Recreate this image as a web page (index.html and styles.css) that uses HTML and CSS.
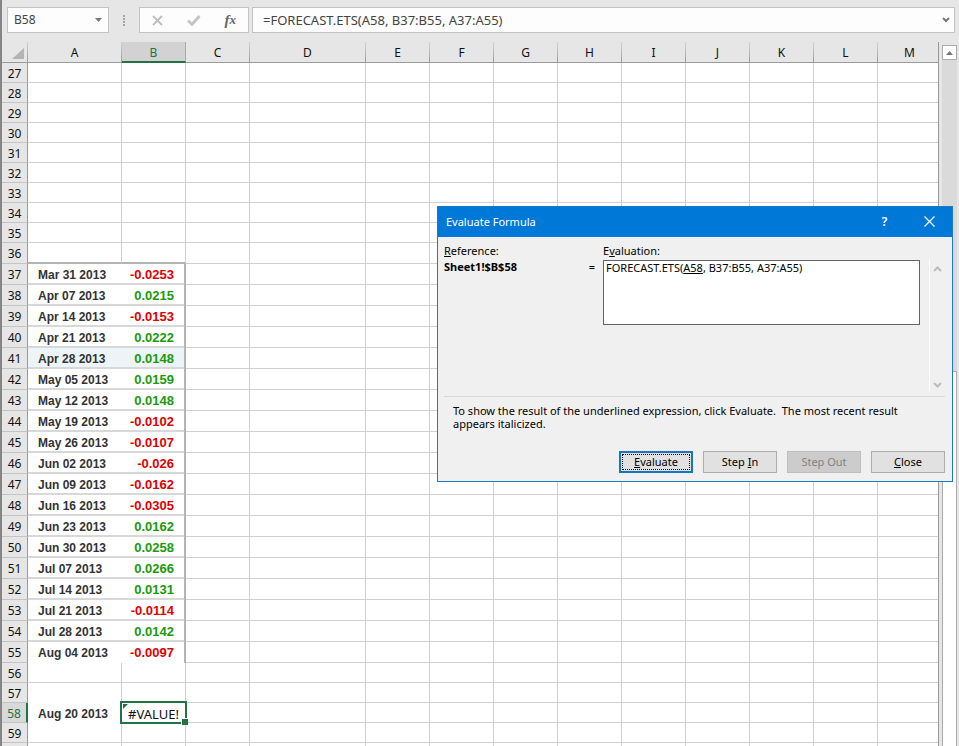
FILE: index.html
```html
<!DOCTYPE html>
<html lang="en">
<head>
<meta charset="utf-8">
<title>Sheet1</title>
<link rel="stylesheet" href="styles.css">
</head>
<body>
<div class="app">
  <header class="formula-bar">
    <div class="name-box">
      <input class="name-input" type="text" value="B58" aria-label="Name box">
      <button class="icon-button" type="button" aria-label="Show names">
        <svg width="7" height="4" viewBox="0 0 7 4"><path d="M0 0h7L3.500 4z" fill="#777"/></svg>
      </button>
    </div>
    <svg class="grip" width="2" height="11" viewBox="0 0 2 11" fill="#a5a5a5"><path d="M0 0h2v2H0zM0 3h2v2H0zM0 6h2v2H0zM0 9h2v2H0z"/></svg>
    <div class="formula-tools">
      <button class="icon-button" type="button" aria-label="Cancel">
        <svg width="12" height="11" viewBox="0 0 12 11"><path d="M1 1l9 9M10 1L1 10" stroke="#bdbdbd" stroke-width="1.800" fill="none"/></svg>
      </button>
      <button class="icon-button" type="button" aria-label="Enter">
        <svg width="14" height="11" viewBox="0 0 14 11"><path d="M1 5.500l4 4L12.500 1" stroke="#c4c4c4" stroke-width="2.800" fill="none"/></svg>
      </button>
      <button class="icon-button fx" type="button" aria-label="Insert function">f<span class="fx-x">x</span></button>
    </div>
    <div class="formula-field">
      <input class="formula-input" type="text" value="=FORECAST.ETS(A58, B37:B55, A37:A55)" aria-label="Formula">
      <button class="icon-button" type="button" aria-label="Expand formula bar">
        <svg width="8" height="6" viewBox="0 0 8 6"><path d="M1 1l3 3 3-3" stroke="#777" stroke-width="2" fill="none"/></svg>
      </button>
    </div>
  </header>
  <main class="workspace">
    <div class="sheet">
      <table class="grid">
        <colgroup>
          <col class="col-index"><col class="col-a"><col class="col-std"><col class="col-std"><col class="col-d">
          <col class="col-std"><col class="col-std"><col class="col-std"><col class="col-std"><col class="col-std">
          <col class="col-std"><col class="col-std"><col class="col-std"><col class="col-std">
        </colgroup>
        <thead>
          <tr>
            <th class="corner"><svg width="12" height="11" viewBox="0 0 12 11"><path d="M12 0v11H0z" fill="#b4b4b4"/></svg></th>
            <th scope="col">A</th><th scope="col" class="active">B</th><th scope="col">C</th><th scope="col">D</th>
            <th scope="col">E</th><th scope="col">F</th><th scope="col">G</th><th scope="col">H</th><th scope="col">I</th>
            <th scope="col">J</th><th scope="col">K</th><th scope="col">L</th><th scope="col">M</th>
          </tr>
        </thead>
        <tbody id="rows"></tbody>
      </table>
    </div>
    <div class="scrollbar">
      <button class="scroll-up" type="button" aria-label="Scroll up">
        <svg width="7" height="4" viewBox="0 0 7 4"><path d="M0 4h7L3.500 0z" fill="#777"/></svg>
      </button>
      <div class="scroll-track"></div>
      <div class="scroll-thumb"></div>
    </div>
  </main>

  <section class="dialog" role="dialog" aria-labelledby="dialog-title">
    <div class="title-bar">
      <h1 class="title" id="dialog-title">Evaluate Formula</h1>
      <button class="title-button help" type="button" aria-label="Help">?</button>
      <button class="title-button" type="button" aria-label="Close window">
        <svg width="11" height="11" viewBox="0 0 11 11"><path d="M.5.5l10 10M10.500.5l-10 10" stroke="#fff" stroke-width="1.200" fill="none"/></svg>
      </button>
    </div>
    <div class="dialog-body">
      <div class="panes">
        <div class="reference">
          <div><u>R</u>eference:</div>
          <div class="reference-line"><b>Sheet1!$B$58</b><span>=</span></div>
        </div>
        <div class="evaluation">
          <label for="evaluation">E<u>v</u>aluation:</label>
          <output class="evaluation-box" id="evaluation">FORECAST.ETS(<u>A58</u>, B37:B55, A37:A55)</output>
        </div>
        <div class="pane-scroll">
          <svg width="9" height="6" viewBox="0 0 9 6"><path d="M1 5l3.500-3.500L8 5" stroke="#bcbcbc" stroke-width="2" fill="none"/></svg>
          <svg width="9" height="6" viewBox="0 0 9 6"><path d="M1 1l3.500 3.500L8 1" stroke="#bcbcbc" stroke-width="2" fill="none"/></svg>
        </div>
      </div>
      <p class="hint">To show the result of the underlined expression, click Evaluate.&nbsp; The most recent result appears italicized.</p>
      <div class="actions">
        <button class="action primary" type="button"><u>E</u>valuate</button>
        <button class="action" type="button">Step <u>I</u>n</button>
        <button class="action" type="button" disabled>Step Out</button>
        <button class="action" type="button"><u>C</u>lose</button>
      </div>
    </div>
  </section>
</div>
<script src="sheet.js"></script>
</body>
</html>
```
FILE: styles.css
```css
* {
  box-sizing: border-box;
}

body {
  margin: 0;
  font: 12px/16px "Noto Sans", "Open Sans", sans-serif;
  color: #111;
  background: #e6e6e6;
}

button,
input {
  font: inherit;
  color: inherit;
}

.app {
  position: relative;
  display: flex;
  flex-direction: column;
  height: 100vh;
  overflow: hidden;
  border-left: 2px solid #858585;
}

/* Formula bar */
.formula-bar {
  display: flex;
  flex: none;
  align-items: center;
  height: 42px;
  padding: 0 4px 2px 5px;
  color: #444;
}

.name-box,
.formula-tools,
.formula-field {
  display: flex;
  align-items: center;
  height: 26px;
  background: #fdfdfd;
  border: 1px solid #c3c3c3;
}

.name-box {
  width: 102px;
  padding: 0 6px;
}

.name-input,
.formula-input {
  flex: 1;
  min-width: 0;
  padding: 0;
  border: 0;
  outline: 0;
  background: none;
}

.formula-input {
  font-size: 13px;
}

.icon-button {
  display: flex;
  align-items: center;
  justify-content: center;
  padding: 0;
  border: 0;
  background: none;
}

.grip {
  margin: 0 14px;
}

.formula-tools {
  justify-content: space-between;
  width: 110px;
  padding: 0 12px;
  margin-right: 3px;
}

.fx {
  font: italic bold 15px/20px "Liberation Serif", serif;
  color: #666;
}

.fx-x {
  font-size: 13px;
}

.formula-field {
  flex: 1;
  padding: 0 4px 0 10px;
}

/* Worksheet */
.workspace {
  display: flex;
  flex: 1;
  min-height: 0;
}

.sheet {
  flex: 1;
  min-width: 0;
  overflow: hidden;
  border-right: 1px solid #999;
}

.grid {
  table-layout: fixed;
  width: 936px;
  border-spacing: 0;
  background: #fff;
}

.col-index {
  width: 26px;
}

.col-a {
  width: 94px;
}

.col-std {
  width: 64px;
}

.col-d {
  width: 116px;
}

.grid th {
  padding: 2px 0 0;
  font-weight: normal;
  background: #e6e6e6;
}

.grid thead th {
  height: 21px;
  border-right: 1px solid #aaa;
  border-bottom: 1px solid #999;
  border-image: linear-gradient(#d4d4d4, #999) 1;
  border-left: 0;
  border-top: 0;
}

.grid thead th.active {
  color: #217346;
  background: #d2d2d2;
  border-image: none;
  border-bottom: 2px solid #217346;
}

.corner svg {
  display: block;
  margin-left: 10px;
}

.grid td {
  height: 20px;
  padding: 2px 0 0;
  border-right: 1px solid #d0d0d0;
  border-bottom: 1px solid #d0d0d0;
}

.grid tbody th {
  border-right: 1px solid #999;
  border-bottom: 1px solid #c4c4c4;
}

.grid tbody th.active {
  color: #217346;
  background: #d9d9d9;
  border-right: 2px solid #217346;
}

.grid .tall td {
  height: 21px;
}

.grid td.date,
.grid td.value {
  padding-bottom: 1px;
  font: bold 13px/16px "Liberation Sans", sans-serif;
  color: #333;
  border-bottom: 0;
}

.grid td.date {
  padding-left: 10px;
  font-size: 12px;
  border-right: 0;
}

.grid td.value {
  padding-right: 10px;
  text-align: right;
  border-right: 2px solid #b4b4b4;
}

.grid td.gain {
  color: #1a9a0a;
}

.grid td.loss {
  color: #e00000;
}

.grid .data td.date,
.grid .data td.value {
  box-shadow: inset 0 -2px #d8d8d8;
}

.grid td.under-rule {
  border-bottom: 2px solid #b4b4b4;
}

.grid td.tinted {
  background: #edf4f8;
}

.grid tr td.open,
.grid .data td.open {
  border-bottom-color: transparent;
  box-shadow: none;
}

.grid td.selected {
  position: relative;
  font-size: 13px;
  text-align: center;
}

.selection {
  position: absolute;
  inset: -2px -2px -2px -2px;
  border: 2px solid #217346;
}

.selection::before {
  content: "";
  position: absolute;
  top: 1px;
  left: 1px;
  border-top: 5px solid #217346;
  border-right: 5px solid transparent;
}

.selection::after {
  content: "";
  position: absolute;
  right: -3px;
  bottom: -3px;
  width: 6px;
  height: 6px;
  background: #217346;
  border-top: 1px solid #fff;
  border-left: 1px solid #fff;
}

/* Vertical scroll bar */
.scrollbar {
  display: flex;
  flex: none;
  flex-direction: column;
  width: 20px;
  padding: 3px 2px 0 3px;
}

.scroll-up {
  display: flex;
  align-items: center;
  justify-content: center;
  height: 15px;
  padding: 0;
  background: #fff;
  border: 1px solid #ababab;
}

.scroll-track {
  flex: 311;
  background: #dadada;
}

.scroll-thumb {
  flex: 375;
  background: #fff;
  border: 1px solid #ababab;
  border-bottom: 0;
}

/* Evaluate Formula dialog */
.dialog {
  position: absolute;
  top: 206px;
  right: 6px;
  width: 516px;
  font-size: 11px;
  line-height: 13px;
  color: #000;
  background: #f0f0f0;
  border: 1px solid #1a7bc4;
}

.title-bar {
  display: flex;
  align-items: center;
  height: 30px;
  padding: 0 0 2px 8px;
  color: #fff;
  background: #0078d7;
}

.title {
  flex: 1;
  margin: 0;
  font-size: 11px;
  font-weight: normal;
}

.title-button {
  display: flex;
  align-items: center;
  justify-content: center;
  width: 45px;
  height: 28px;
  padding: 0;
  border: 0;
  background: none;
}

.help {
  font-size: 12px;
  font-weight: 600;
}

.dialog-body {
  padding: 7px 7px 8px 6px;
}

.panes {
  display: flex;
  height: 153px;
  border-bottom: 1px solid #d9d9d9;
}

.reference {
  flex: 1;
}

.reference-line {
  display: flex;
  justify-content: space-between;
  margin-top: 3px;
  padding-right: 8px;
}

.evaluation {
  display: flex;
  flex-direction: column;
  width: 317px;
}

.evaluation-box {
  height: 65px;
  margin-top: 3px;
  padding: 0 2px;
  background: #fff;
  border: 1px solid #646464;
}

.pane-scroll {
  display: flex;
  flex-direction: column;
  align-items: center;
  justify-content: space-between;
  width: 16px;
  margin: 16px 0 5px 9px;
  padding: 6px 0 3px;
  border-left: 1px solid #fff;
}

.hint {
  margin: 7px 40px 21px 9px;
}

.actions {
  display: flex;
  gap: 10px;
  justify-content: flex-end;
}

.action {
  width: 74px;
  height: 22px;
  padding: 0 0 2px;
  background: #e1e1e1;
  border: 1px solid #adadad;
}

.action.primary {
  border: 2px solid #1576bd;
  outline: 1px dotted #000;
  outline-offset: -4px;
}

.action:disabled {
  color: #838383;
  background: #ccc;
  border-color: #bfbfbf;
}
```
FILE: sheet.js
```js
const FIRST_ROW = 27;
const LAST_ROW = 59;
const COLUMNS = "ABCDEFGHIJKLM";

const returns = {
  37: ["Mar 31 2013", "-0.0253"],
  38: ["Apr 07 2013", "0.0215"],
  39: ["Apr 14 2013", "-0.0153"],
  40: ["Apr 21 2013", "0.0222"],
  41: ["Apr 28 2013", "0.0148"],
  42: ["May 05 2013", "0.0159"],
  43: ["May 12 2013", "0.0148"],
  44: ["May 19 2013", "-0.0102"],
  45: ["May 26 2013", "-0.0107"],
  46: ["Jun 02 2013", "-0.026"],
  47: ["Jun 09 2013", "-0.0162"],
  48: ["Jun 16 2013", "-0.0305"],
  49: ["Jun 23 2013", "0.0162"],
  50: ["Jun 30 2013", "0.0258"],
  51: ["Jul 07 2013", "0.0266"],
  52: ["Jul 14 2013", "0.0131"],
  53: ["Jul 21 2013", "-0.0114"],
  54: ["Jul 28 2013", "0.0142"],
  55: ["Aug 04 2013", "-0.0097"],
};

function buildCell(row, column) {
  const cell = document.createElement("td");
  const entry = returns[row];

  if (entry && column === "A") {
    cell.textContent = entry[0];
    cell.classList.add("date");
  } else if (entry && column === "B") {
    cell.textContent = entry[1];
    cell.classList.add("value", entry[1].startsWith("-") ? "loss" : "gain");
  } else if (row === 58 && column === "A") {
    cell.textContent = "Aug 20 2013";
    cell.classList.add("date");
  } else if (row === 58 && column === "B") {
    cell.innerHTML = '#VALUE!<span class="selection"></span>';
    cell.classList.add("selected");
  }

  if (column === "A" || column === "B") {
    if (row === 36) cell.classList.add("under-rule");
    if (row === 41) cell.classList.add("tinted");
    if (row === 55) cell.classList.add("open");
  }
  if (column === "A" && (row === 57 || row === 58)) cell.classList.add("open");
  return cell;
}

const body = document.getElementById("rows");
for (let row = FIRST_ROW; row <= LAST_ROW + 1; row++) {
  const line = document.createElement("tr");
  if (returns[row]) line.className = "data tall";
  if (row === 36) line.className = "tall";

  const index = document.createElement("th");
  index.scope = "row";
  // The row after the last one only shows its top edge, so it has no number.
  if (row <= LAST_ROW) index.textContent = row;
  if (row === 58) index.className = "active";
  line.append(index);

  for (const column of COLUMNS) line.append(buildCell(row, column));
  body.append(line);
}
```
